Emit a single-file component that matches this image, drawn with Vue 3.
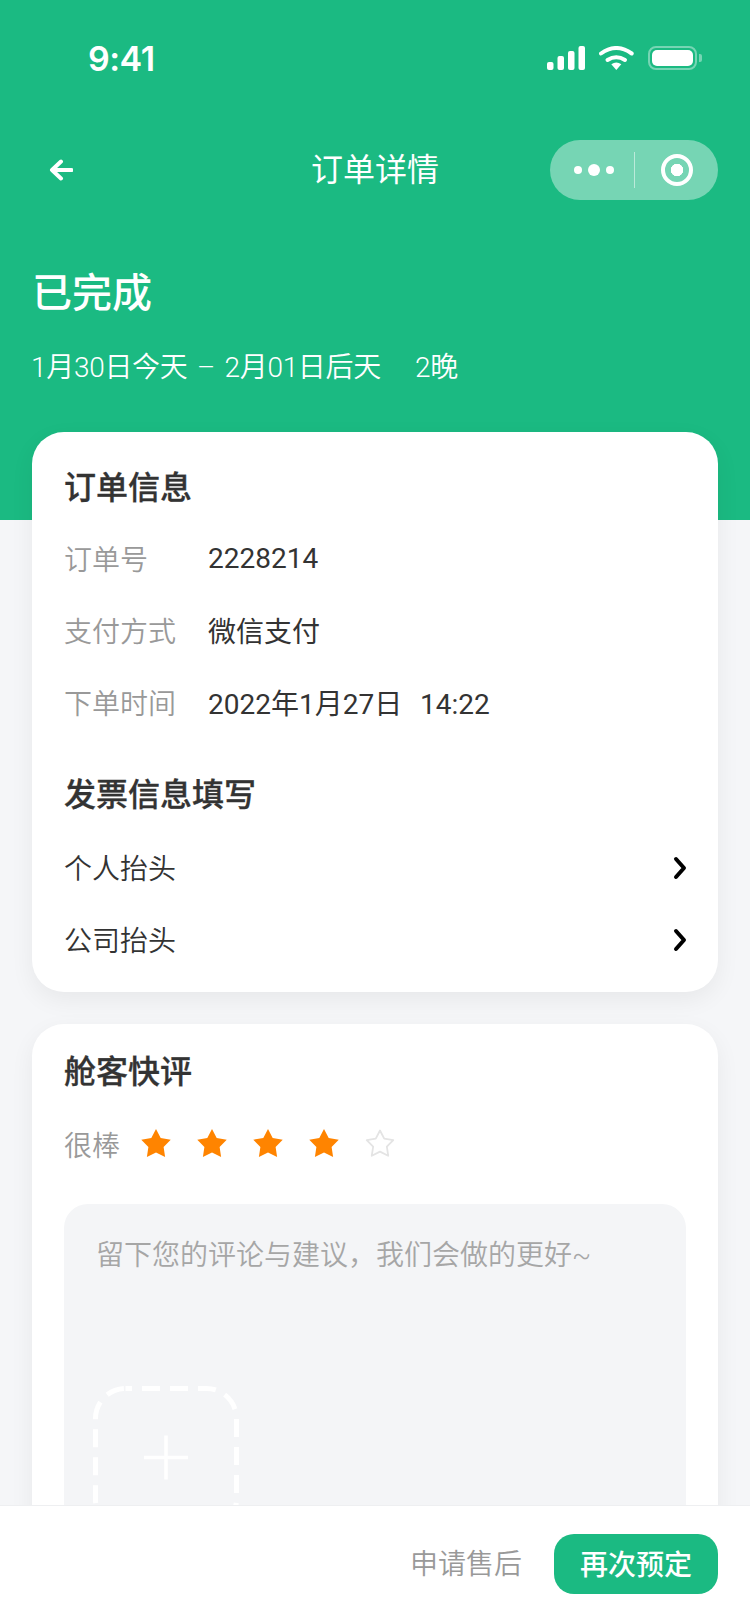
<template>
  <div class="page">
    <header class="hero">
      <div class="status-bar">
        <span class="time">9:41</span>
        <div class="status-icons">
          <svg width="38" height="24" viewBox="0 0 38 24">
            <rect x="0" y="16" width="6.500" height="8" rx="2" fill="#fff" />
            <rect x="10.500" y="10" width="6.500" height="14" rx="2" fill="#fff" />
            <rect x="21" y="5" width="6.500" height="19" rx="2" fill="#fff" />
            <rect x="31.500" y="0" width="6.500" height="24" rx="2" fill="#fff" />
          </svg>
          <svg width="35" height="24" viewBox="0 0 35 24">
            <path d="M2 7.500Q17.300 -3.500 32.700 7.500" fill="none" stroke="#fff" stroke-width="4" stroke-linecap="round" />
            <path d="M8.500 14Q17.300 8.600 26 14" fill="none" stroke="#fff" stroke-width="4" stroke-linecap="round" />
            <path d="M12.300 18.300Q17.300 14.800 22.300 18.300L17.300 24Z" fill="#fff" />
          </svg>
          <div class="battery"><div class="battery-level"></div></div>
        </div>
      </div>
      <nav class="nav">
        <svg class="back" width="24" height="22" viewBox="0 0 24 22">
          <path d="M12 2.500L3 11L12 19.500M4 11H22.500" fill="none" stroke="#fff" stroke-width="4" stroke-linecap="round" stroke-linejoin="round" />
        </svg>
        <h1 class="nav-title">订单详情</h1>
        <div class="capsule">
          <div class="capsule-dots">
            <i class="dot dot-s"></i><i class="dot"></i><i class="dot dot-s"></i>
          </div>
          <div class="capsule-line"></div>
          <div class="capsule-target"><i></i></div>
        </div>
      </nav>
      <div class="state">已完成</div>
      <div class="dates">
        <span>1月30日今天 – 2月01日后天</span>
        <span>2晚</span>
      </div>
    </header>

    <main class="content">
      <section class="card card-order">
        <h2 class="card-title">订单信息</h2>
        <div class="info-list">
          <div v-for="row in orderRows" :key="row.label" class="info-row">
            <span class="info-label">{{ row.label }}</span>
            <span class="info-value">{{ row.value }}</span>
          </div>
        </div>
        <h2 class="card-title invoice-title">发票信息填写</h2>
        <div v-for="item in invoiceRows" :key="item" class="link-row">
          <span>{{ item }}</span>
          <svg class="chevron" width="16" height="24" viewBox="0 0 16 24">
            <path d="M3 3L11 12L3 21" fill="none" stroke="#000" stroke-width="4" stroke-linecap="round" stroke-linejoin="round" />
          </svg>
        </div>
      </section>

      <section class="card card-review">
        <h2 class="card-title">舱客快评</h2>
        <div class="rating">
          <span class="rating-label">很棒</span>
          <div class="stars">
            <svg v-for="n in 5" :key="n" width="30" height="30" viewBox="0 0 30 30">
              <path
                d="M15 0L19.700 9.030L29.740 10.710L22.610 17.970L24.110 28.040L15 23.500L5.890 28.040L7.390 17.970L0.260 10.710L10.300 9.030Z"
                :fill="n <= 4 ? '#ff8400' : 'none'"
                :stroke="n <= 4 ? 'none' : '#e4e4e4'"
                :stroke-width="2"
                :transform="n <= 4 ? '' : 'translate(1.500 1.500) scale(0.9)'"
                stroke-linejoin="round"
              />
            </svg>
          </div>
        </div>
        <div class="comment-box">
          <p class="placeholder">留下您的评论与建议，我们会做的更好~</p>
          <svg class="upload" width="146" height="146" viewBox="0 0 146 146">
            <rect x="2.500" y="2.500" width="141" height="141" rx="30" fill="none" stroke="#fff" stroke-width="5" stroke-dasharray="18 10" stroke-dashoffset="-16.500" />
            <path d="M51 71.500H95M73 49.500V93.500" fill="none" stroke="#fff" stroke-width="3.500" />
          </svg>
        </div>
      </section>
    </main>

    <footer class="footer">
      <span class="after-sale">申请售后</span>
      <button class="rebook"><span>再次预定</span></button>
    </footer>
  </div>
</template>

<script setup>
const orderRows = [
  { label: '订单号', value: '2228214' },
  { label: '支付方式', value: '微信支付' },
  { label: '下单时间', value: '2022年1月27日\u00a0\u00a0\u00a014:22' }
]

const invoiceRows = ['个人抬头', '公司抬头']
</script>

<style>
html,
body {
  margin: 0;
  background: #f5f6f8;
}
</style>

<style scoped>
.page {
  position: relative;
  width: 750px;
  height: 1624px;
  overflow: hidden;
  background: #f5f6f8;
  color: #333;
  font-family: Roboto, "Noto Sans CJK SC", sans-serif;
  font-weight: 350;
}

.hero {
  height: 520px;
  box-sizing: border-box;
  background: #1bba82;
  color: #fff;
}

.status-bar {
  display: flex;
  justify-content: space-between;
  align-items: center;
  height: 40px;
  padding: 38px 53px 0 88px;
}

.time {
  font-family: Inter, sans-serif;
  font-size: 34px;
  font-weight: 600;
  letter-spacing: -0.5px;
}

.status-icons {
  display: flex;
  align-items: center;
  gap: 14px;
}

.battery {
  position: relative;
  width: 49px;
  height: 24px;
  box-sizing: border-box;
  padding: 2px;
  border: 2px solid rgba(255, 255, 255, 0.4);
  border-radius: 8px;
}

.battery::after {
  content: "";
  position: absolute;
  right: -7px;
  top: 6px;
  width: 3px;
  height: 8px;
  border-radius: 0 2px 2px 0;
  background: rgba(255, 255, 255, 0.4);
}

.battery-level {
  height: 100%;
  border-radius: 5px;
  background: #fff;
}

.nav {
  position: relative;
  display: flex;
  align-items: center;
  justify-content: space-between;
  height: 60px;
  margin-top: 62px;
  padding: 0 32px 0 49px;
}

.nav-title {
  position: absolute;
  left: 0;
  right: 0;
  margin: 0;
  text-align: center;
  font-size: 32px;
  font-weight: 400;
  line-height: 60px;
}

.capsule {
  position: relative;
  display: flex;
  align-items: center;
  width: 168px;
  height: 60px;
  border-radius: 30px;
  background: rgba(255, 255, 255, 0.4);
}

.capsule-dots {
  display: flex;
  align-items: center;
  justify-content: center;
  gap: 6px;
  width: 84px;
  padding-left: 3px;
  box-sizing: border-box;
}

.dot {
  width: 12px;
  height: 12px;
  border-radius: 50%;
  background: #fff;
}

.dot-s {
  width: 8px;
  height: 8px;
}

.capsule-line {
  width: 1px;
  height: 36px;
  background: rgba(255, 255, 255, 0.5);
}

.capsule-target {
  display: flex;
  align-items: center;
  justify-content: center;
  flex: 1;
}

.capsule-target i {
  width: 32px;
  height: 32px;
  box-sizing: border-box;
  border: 4px solid #fff;
  border-radius: 50%;
  background: radial-gradient(circle, #fff 0 6px, transparent 6.5px);
}

.state {
  margin: 65px 0 0 32px;
  font-size: 40px;
  font-weight: 500;
  line-height: 58px;
}

.dates {
  display: flex;
  gap: 34px;
  margin: 25px 0 0 31px;
  font-size: 28px;
  line-height: 40px;
  letter-spacing: -0.3px;
  word-spacing: 3px;
}

.content {
  display: flex;
  flex-direction: column;
  gap: 32px;
  margin-top: -88px;
  padding: 0 32px;
}

.card {
  padding: 34px 32px 32px;
  border-radius: 32px;
  background: #fff;
  box-shadow: 0 8px 24px rgba(0, 0, 0, 0.06);
}

.card-order {
  height: 560px;
  box-sizing: border-box;
}

.card-review {
  padding-top: 26px;
  padding-bottom: 300px;
}

.card-title {
  margin: 0;
  font-size: 32px;
  font-weight: 500;
  line-height: 44px;
  -webkit-text-stroke: 0.3px currentColor;
}

.info-list {
  display: flex;
  flex-direction: column;
  gap: 32px;
  margin-top: 28px;
}

.info-row {
  display: flex;
  align-items: center;
  height: 40px;
  font-size: 28px;
}

.info-label {
  width: 144px;
  color: #999;
}

.info-value {
  font-weight: 400;
  word-spacing: -1px;
}

.invoice-title {
  margin-top: 51px;
  margin-bottom: -2px;
}

.link-row {
  display: flex;
  justify-content: space-between;
  align-items: center;
  height: 40px;
  margin-top: 32px;
  font-size: 28px;
}

.chevron {
  margin: 2px -3px 0 0;
}

.rating {
  display: flex;
  align-items: center;
  margin-top: 30px;
}

.rating-label {
  font-size: 28px;
  color: #999;
}

.stars {
  display: flex;
  gap: 26px;
  margin-left: 21px;
}

.comment-box {
  height: 400px;
  margin-top: 40px;
  padding: 32px;
  border-radius: 24px;
  background: #f4f5f7;
}

.placeholder {
  margin: 0;
  font-size: 28px;
  line-height: 40px;
  color: #a6a6a6;
}

.upload {
  display: block;
  margin: 110px 0 0 -3px;
}

.footer {
  position: absolute;
  left: 0;
  right: 0;
  bottom: 0;
  display: flex;
  justify-content: flex-end;
  align-items: flex-start;
  gap: 32px;
  height: 119px;
  box-sizing: border-box;
  padding: 28px 32px 0;
  border-top: 1px solid #eeeff1;
  background: #fff;
}

.after-sale {
  font-size: 28px;
  line-height: 62px;
  color: #999;
}

.rebook {
  width: 164px;
  height: 60px;
  padding: 0 0 2px;
  border: none;
  border-radius: 20px;
  background: #1bba82;
  color: #fff;
  font-family: inherit;
  font-size: 28px;
  font-weight: 500;
}
</style>
